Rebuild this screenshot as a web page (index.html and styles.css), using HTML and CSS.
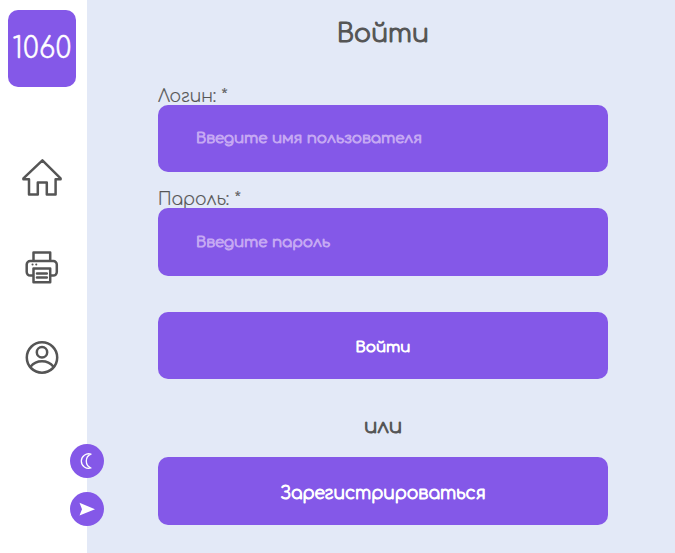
FILE: index.html
```html
<!DOCTYPE html>
<html lang="ru">
<head>
<meta charset="utf-8">
<title>Войти</title>
<link rel="stylesheet" href="styles.css">
</head>
<body>
<aside class="sidebar">
  <a class="logo"><span>1060</span></a>
  <nav class="nav">
    <svg class="nav-icon" viewBox="0 0 44 44"><path d="M3.400 22.400 22.400 4.400 40.600 22.400v.8h-5v15.200h-8.800V26.600h-9v11.800H9V23.200H3.400z"/></svg>
    <svg class="nav-icon" viewBox="0 0 44 44"><path d="M13.500 15V6.500h16.700V15M13.500 29.600h-3.300a3.500 3.500 0 0 1-3.500-3.500V18.500a3.500 3.500 0 0 1 3.500-3.500h23.100a3.500 3.500 0 0 1 3.500 3.500v7.600a3.500 3.500 0 0 1-3.500 3.500h-3.100M13.500 22.600h16.700v13.700H13.500zM17 27.400h9.800M17 31.500h9.800"/><path class="dots" d="M12.500 18.600h.1M16.200 18.600h.1"/></svg>
    <svg class="nav-icon" viewBox="0 0 44 44"><circle cx="22" cy="21.500" r="15.200"/><circle cx="22" cy="16.300" r="5.200"/><path d="M10.500 30.800c6-7.300 17-7.300 23 0"/></svg>
  </nav>
</aside>
<div class="floating">
  <button class="round"><svg viewBox="0 0 34 34"><path class="moon" d="M21 10.200a7.300 7.300 0 1 0 0 13.800 7.400 7.400 0 0 1 0-13.800z"/></svg></button>
  <button class="round"><svg viewBox="0 0 34 34"><path class="arrow" d="M9.500 10.800 25 17.200 9.500 23.500l2.500-6.300z"/></svg></button>
</div>
<main class="content">
  <form class="form">
    <h1>Войти</h1>
    <label class="label" for="login"><span>Логин: *</span></label>
    <input class="field login" id="login" placeholder="Введите имя пользователя">
    <label class="label" for="password"><span>Пароль: *</span></label>
    <input class="field password" id="password" type="password" placeholder="Введите пароль">
    <button class="button submit" type="button">Войти</button>
    <p class="or">или</p>
    <button class="button register" type="button">Зарегистрироваться</button>
  </form>
</main>
</body>
</html>
```
FILE: styles.css
```css
* { box-sizing: border-box; }
body { margin: 0; height: 553px; display: flex; overflow: hidden; background: #e3e9f7; color: #555; font-family: Comfortaa, "Noto Sans", sans-serif; }
.sidebar { width: 87px; height: 553px; flex: none; background: #fff; padding: 10px 8px; }
.logo { width: 68px; height: 77px; border-radius: 10px; background: #8458e8; color: #fff; display: flex; align-items: center; justify-content: center; font: 300 28px Comfortaa, Lato, sans-serif; letter-spacing: .3px; -webkit-text-stroke: .5px #fff; }
.logo span { margin-top: 1px; }
.nav { margin-top: 69px; padding-left: 12px; display: flex; flex-direction: column; gap: 46px; }
.nav-icon { width: 44px; height: 44px; fill: none; stroke: #555; stroke-width: 2.500; stroke-linejoin: round; stroke-linecap: round; }
.dots { stroke-width: 2; }
.floating { position: absolute; left: 70px; top: 444px; display: flex; flex-direction: column; gap: 14px; }
.round { width: 34px; height: 34px; padding: 0; border: 0; border-radius: 50%; background: #8458e8; }
.round svg { display: block; width: 34px; height: 34px; }
.moon { fill: none; stroke: #fff; stroke-width: 1.300; stroke-linejoin: round; }
.arrow { fill: #fff; }
.content { flex: 1; padding-left: 71px; }
.form { width: 450px; display: flex; flex-direction: column; }
h1 { margin: 14px 0 31px; height: 40px; line-height: 40px; font-size: 25px; font-weight: 300; letter-spacing: .1px; -webkit-text-stroke: 1.200px; text-align: center; }
.label { height: 20px; line-height: 23px; font-size: 17px; font-weight: 300; white-space: nowrap; -webkit-text-stroke: .2px; }
.field, .button { width: 450px; height: 67px; border: 0; border-radius: 10px; background: #8458e8; color: #fff; font-family: inherit; font-weight: 300; -webkit-text-stroke: 1px; }
.field { padding: 0 38px; font-size: 15px; outline: 0; }
.field::placeholder { color: #c5a8f3; opacity: 1; }
.login { margin-bottom: 16px; }
.password { height: 68px; margin-bottom: 36px; }
.submit { font-size: 15px; padding-top: 4px; }
.or { margin: 33px 0 15px; height: 30px; line-height: 30px; font-size: 20px; font-weight: 300; letter-spacing: -.2px; -webkit-text-stroke: 1px; text-align: center; }
.register { height: 68px; font-size: 17px; padding-top: 5px; }
```
